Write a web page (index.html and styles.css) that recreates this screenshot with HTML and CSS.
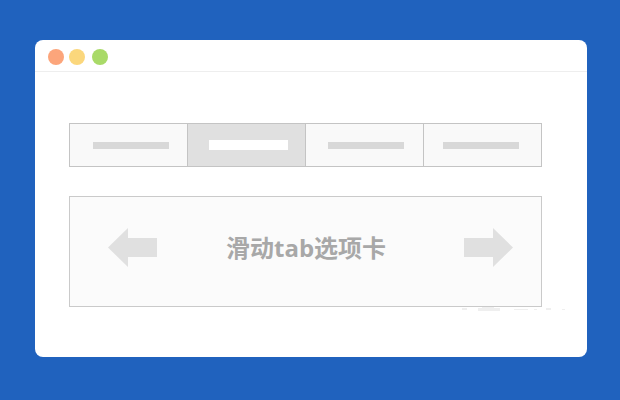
FILE: index.html
```html
<!DOCTYPE html>
<html lang="zh-CN">
<head>
    <meta charset="UTF-8">
    <meta name="viewport" content="width=device-width, initial-scale=1.0">
    <title>滑动tab选项卡</title>
    <link rel="stylesheet" href="styles.css">
</head>
<body>
    <div class="window">
        <div class="titlebar">
            <span class="dot dot-red"></span>
            <span class="dot dot-yellow"></span>
            <span class="dot dot-green"></span>
        </div>

        <div class="content">
            <div class="tabs">
                <div class="tab"><span class="tab-line"></span></div>
                <div class="tab active"><span class="tab-line"></span></div>
                <div class="tab"><span class="tab-line"></span></div>
                <div class="tab"><span class="tab-line"></span></div>
            </div>

            <div class="panel">
                <svg class="arrow" width="49" height="39" viewBox="0 0 49 39">
                    <polygon points="0,19.5 20,0 20,10 49,10 49,29 20,29 20,39"/>
                </svg>
                <h1 class="panel-title">滑动tab选项卡</h1>
                <svg class="arrow arrow-next" width="49" height="39" viewBox="0 0 49 39">
                    <polygon points="49,19.5 29,0 29,10 0,10 0,29 29,29 29,39"/>
                </svg>
            </div>
        </div>

        <!-- leftover marks of a watermark under the panel -->
        <svg class="smudge" width="120" height="4" viewBox="0 0 120 4">
            <rect x="0" y="1" width="5" height="2"/>
            <rect x="16" y="1" width="22" height="3"/>
            <rect x="20" y="0" width="12" height="1"/>
            <rect x="52" y="2" width="14" height="1"/>
            <rect x="72" y="2" width="3" height="1"/>
            <rect x="84" y="1" width="5" height="2"/>
            <rect x="100" y="2" width="3" height="1"/>
        </svg>
    </div>
</body>
</html>
```

FILE: styles.css
```css
body {
    margin: 0;
    padding: 40px 0 0 35px;
    height: 360px;
    overflow: hidden;
    background: #2062be;
    font-family: "Open Sans", "Noto Sans CJK SC", sans-serif;
}

.window {
    position: relative;
    width: 552px;
    height: 317px;
    background: #fff;
    border-radius: 8px;
}

.titlebar {
    display: flex;
    align-items: center;
    height: 31px;
    padding: 0 13px;
    border-bottom: 1px solid #eee;
}

.dot {
    width: 16px;
    height: 16px;
    margin-top: 2px;
    margin-right: 5px;
    border-radius: 50%;
}

.dot-red { background: #fca57b; }
.dot-yellow { background: #fbd77c; margin-right: 7px; }
.dot-green { background: #a9da68; }

.content {
    padding: 51px 45px 0 34px;
}

.tabs {
    display: grid;
    grid-template-columns: repeat(4, 118px);
    width: 472px;
    height: 42px;
    border: 1px solid #c4c4c4;
    border-left: 0;
    background: #f9f9f9;
}

.tab {
    display: flex;
    align-items: center;
    border-left: 1px solid #c4c4c4;
}

.tab:nth-child(1) { padding-left: 23px; }
.tab:nth-child(2) { padding-left: 21px; }
.tab:nth-child(3) { padding-left: 22px; }
.tab:nth-child(4) { padding-left: 19px; }

.tab-line {
    width: 76px;
    height: 7px;
    background: #d8d8d8;
}

.tab.active {
    background: #e0e0e0;
}

.tab.active .tab-line {
    width: 79px;
    height: 10px;
    background: #fff;
}

.panel {
    display: flex;
    align-items: center;
    width: 405px;
    height: 101px;
    margin-top: 29px;
    padding: 0 28px 8px 38px;
    border: 1px solid #cacaca;
    background: #fbfbfb;
}

.arrow {
    fill: #e0e0e0;
    flex: none;
}

.arrow-next {
    margin-left: auto;
}

.panel-title {
    margin: 0 0 0 69px;
    font-size: 24px;
    font-weight: 700;
    line-height: 30px;
    color: #a8a8a8;
    white-space: nowrap;
}

.smudge {
    position: absolute;
    left: 427px;
    top: 267px;
    fill: #efefef;
}
```
